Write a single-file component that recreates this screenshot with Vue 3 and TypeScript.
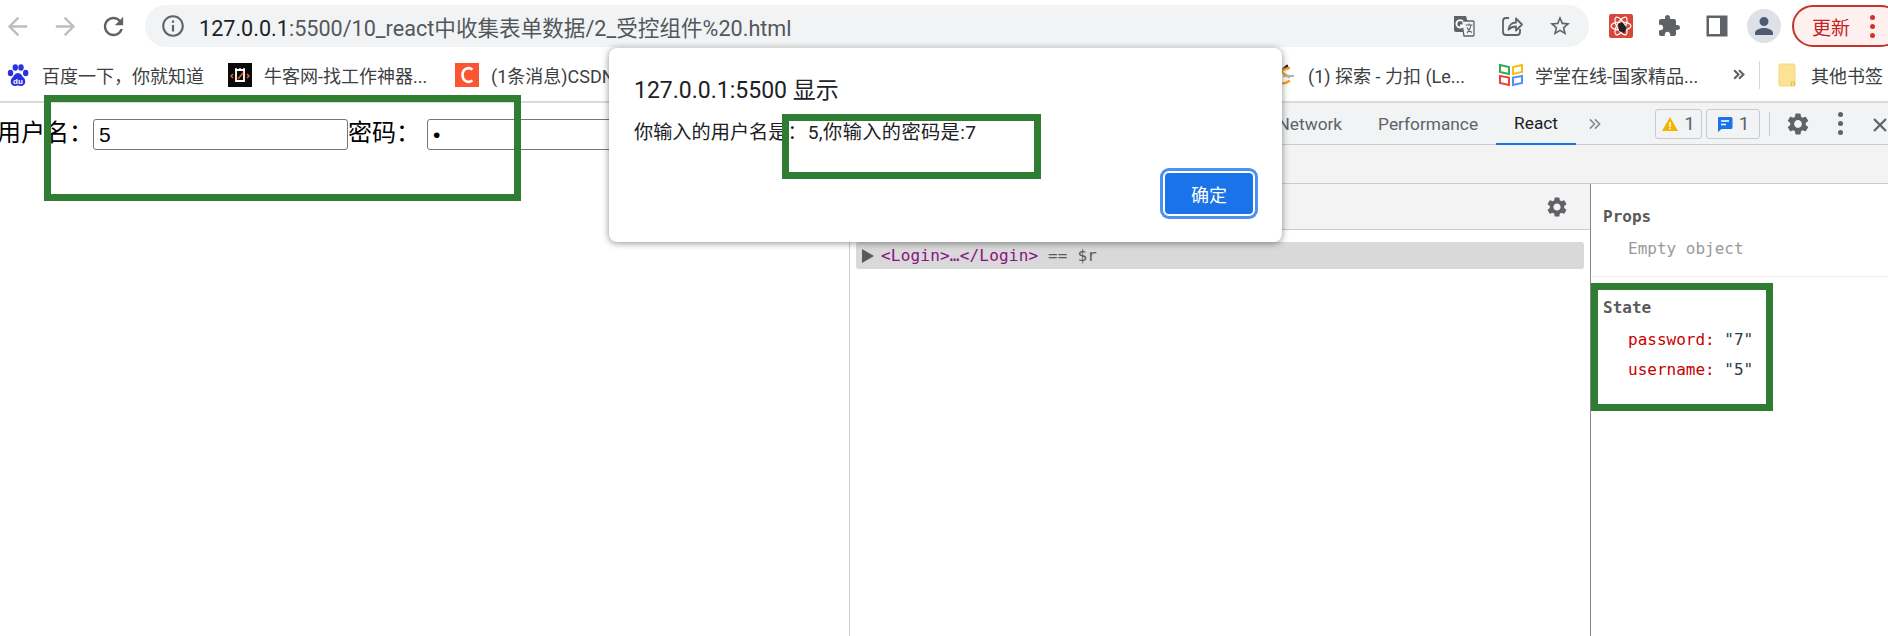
<script setup lang="ts">
const bookmarkLeft = '百度一下，你就知道'
const nowcoder = '牛客网-找工作神器...'
const csdn = '(1条消息)CSDN'
const leetcode = '(1) 探索 - 力扣 (Le...'
const xuetang = '学堂在线-国家精品...'
const others = '其他书签'
</script>

<template>
  <div class="app">
    <header class="toolbar">
      <div class="nav">
        <svg class="nav-ic faint" viewBox="0 0 24 24"><path d="M20 11H7.83l5.59-5.59L12 4l-8 8 8 8 1.41-1.41L7.83 13H20v-2z" /></svg>
      </div>
      <div class="nav">
        <svg class="nav-ic faint" viewBox="0 0 24 24"><path d="M12 4l-1.41 1.41L16.17 11H4v2h12.17l-5.58 5.59L12 20l8-8z" /></svg>
      </div>
      <div class="nav">
        <svg class="nav-ic solid" viewBox="0 0 24 24"><path d="M17.65 6.35C16.2 4.9 14.21 4 12 4c-4.42 0-7.99 3.58-7.99 8s3.57 8 7.99 8c3.73 0 6.84-2.55 7.73-6h-2.08c-.82 2.33-3.04 4-5.65 4-3.31 0-6-2.69-6-6s2.69-6 6-6c1.66 0 3.14.69 4.22 1.78L13 11h7V4l-2.35 2.35z" /></svg>
      </div>
      <div class="omnibox">
        <svg class="info-ic solid" viewBox="0 0 24 24"><path d="M11 7h2v2h-2zm0 4h2v6h-2zm1-9C6.48 2 2 6.48 2 12s4.48 10 10 10 10-4.48 10-10S17.52 2 12 2zm0 18c-4.41 0-8-3.59-8-8s3.59-8 8-8 8 3.59 8 8-3.59 8-8 8z" /></svg>
        <div class="url"><span class="host">127.0.0.1</span>:5500/10_react中收集表单数据/2_受控组件%20.html</div>
        <svg class="ic" viewBox="0 0 24 24">
          <path d="M2 2h12l1.500 5v11H4a2 2 0 0 1-2-2z" fill="#5f6368" />
          <path d="M9.500 7H21a1 1 0 0 1 1 1v13a1 1 0 0 1-1 1H12z" fill="#f1f3f4" stroke="#5f6368" stroke-width="1.300" />
          <path d="M13.500 11h7M17 9.500V11M15 19c2.200-2 3.500-4.500 4-8M15 13.500c1 2.300 2.800 4 5 5" fill="none" stroke="#5f6368" stroke-width="1.100" />
          <path d="M11 7.300A3.800 3.800 0 1 0 11.600 11.500H8" fill="none" stroke="#fff" stroke-width="1.800" />
        </svg>
        <svg class="ic" viewBox="0 0 24 24" fill="none" stroke="#5f6368" stroke-width="1.800">
          <path d="M9 4H6a3 3 0 0 0-3 3v11a3 3 0 0 0 3 3h11a3 3 0 0 0 3-3v-3" />
          <path d="M8.500 15.500c.3-4.500 3.500-7 7.500-7V4.500l6 6-6 6v-4c-3 0-5.500 1-7.500 3z" stroke-linejoin="round" />
        </svg>
        <svg class="ic solid" viewBox="0 0 24 24"><path d="M22 9.240l-7.190-.62L12 2 9.190 8.630 2 9.240l5.460 4.730L5.820 21 12 17.270 18.180 21l-1.630-7.030L22 9.240zM12 15.400l-3.760 2.270 1-4.280-3.320-2.880 4.380-.38L12 6.100l1.710 4.040 4.380.38-3.320 2.880 1 4.280L12 15.400z" /></svg>
      </div>
      <div class="actions">
        <svg class="ic" viewBox="0 0 24 24">
          <rect width="24" height="24" rx="2" fill="#d8483a" />
          <g fill="none" stroke="#fff" stroke-width="1.200">
            <ellipse cx="12" cy="12" rx="10" ry="4" />
            <ellipse cx="12" cy="12" rx="10" ry="4" transform="rotate(60 12 12)" />
            <ellipse cx="12" cy="12" rx="10" ry="4" transform="rotate(120 12 12)" />
          </g>
          <path d="M9 10l4-2 5 6-3 5-5-2z" fill="#222" />
        </svg>
        <svg class="ic solid" viewBox="0 0 24 24"><path d="M20.500 11H19V7c0-1.100-.9-2-2-2h-4V3.500C13 2.120 11.880 1 10.500 1S8 2.120 8 3.500V5H4c-1.100 0-1.990.9-1.990 2v3.800H3.500c1.490 0 2.700 1.210 2.700 2.700s-1.210 2.700-2.700 2.700H2V20c0 1.100.9 2 2 2h3.800v-1.500c0-1.490 1.210-2.700 2.700-2.700 1.490 0 2.700 1.210 2.700 2.700V22H17c1.100 0 2-.9 2-2v-4h1.500c1.380 0 2.500-1.120 2.500-2.500S21.880 11 20.500 11z" /></svg>
        <svg class="ic solid" viewBox="0 0 24 24">
          <path fill-rule="evenodd" d="M1.500 1.500h21v21h-21zM4 4v16h11V4z" />
        </svg>
        <div class="avatar">
          <svg viewBox="0 0 24 24"><path d="M12 12a4.500 4.500 0 1 0 0-9 4.500 4.500 0 0 0 0 9zm0 2c-3.500 0-9 1.700-9 5v2h18v-2c0-3.300-5.500-5-9-5z" /></svg>
        </div>
        <div class="update">
          <span>更新</span>
          <div class="update-dots"><i></i><i></i><i></i></div>
        </div>
      </div>
    </header>

    <nav class="bookmarks">
      <div class="bm bm-baidu">
        <svg class="fav" viewBox="0 0 24 24">
          <g fill="#2932e1">
            <ellipse cx="4.500" cy="10" rx="2.700" ry="3.300" />
            <ellipse cx="9.300" cy="4.500" rx="2.700" ry="3.300" />
            <ellipse cx="15" cy="4.500" rx="2.700" ry="3.300" />
            <ellipse cx="19.700" cy="10" rx="2.700" ry="3.300" />
            <path d="M12 10c-3 0-4 3-6 5s-2 8 3 8c1 0 2-.5 3-.5s2 .5 3 .5c5 0 5-6 3-8s-3-5-6-5z" />
          </g>
          <text x="12" y="20.500" class="du">du</text>
        </svg>
        <span>{{ bookmarkLeft }}</span>
      </div>
      <div class="bm bm-now">
        <svg class="fav" viewBox="0 0 24 24">
          <rect width="24" height="24" fill="#0b0b0b" />
          <path d="M8 7h8v11H8z" fill="none" stroke="#fff" stroke-width="1.800" />
          <path d="M8 5v3M12 5v3M16 5v3" stroke="#fff" stroke-width="1.500" />
          <path d="M5 11l-2 2 2 2M19 11l2 2-2 2M10 16l5-6" fill="none" stroke="#ee5a2c" stroke-width="1.500" />
        </svg>
        <span>{{ nowcoder }}</span>
      </div>
      <div class="bm bm-csdn">
        <svg class="fav" viewBox="0 0 24 24">
          <rect width="24" height="24" fill="#fc5531" />
          <path d="M17.500 6.500C13 3.500 7.500 6 7.500 12s5.500 8.500 10 5.500" fill="none" stroke="#fff" stroke-width="2.600" />
        </svg>
        <span>{{ csdn }}</span>
      </div>
      <div class="bm bm-leet">
        <svg class="fav" viewBox="0 0 24 24">
          <path d="M15 3L5 12" fill="none" stroke="#222" stroke-width="2.600" stroke-linecap="round" />
          <path d="M7 8l10 -3M9 9l8 5M5 15c1 6 7 7 12 3" fill="none" stroke="#f6a11e" stroke-width="2.400" stroke-linecap="round" />
          <path d="M11 13h11" stroke="#b5b5b5" stroke-width="2.200" />
        </svg>
        <span>{{ leetcode }}</span>
      </div>
      <div class="bm bm-xue">
        <svg class="fav" viewBox="0 0 24 24">
          <path d="M1 2l9 2v7l-9-2z" fill="none" stroke="#35a853" stroke-width="2" />
          <path d="M23 2l-9 2v7l9-2z" fill="none" stroke="#f7bd16" stroke-width="2" />
          <path d="M1 13l9 1.500v7.500l-9-2z" fill="none" stroke="#ea4335" stroke-width="2" />
          <path d="M23 13l-9 1.500v7.500l9-2z" fill="none" stroke="#4f8ff7" stroke-width="2" />
        </svg>
        <span>{{ xuetang }}</span>
      </div>
      <div class="bm-more">
        <svg viewBox="0 0 12 12" fill="none" stroke="#5f6368" stroke-width="2"><path d="M2 2l4 4-4 4M6.500 2l4 4-4 4" /></svg>
      </div>
      <div class="bm-sep"></div>
      <div class="bm bm-other">
        <svg class="folder" viewBox="0 0 18 24">
          <path d="M1 2a1 1 0 0 1 1-1h13a2 2 0 0 1 2 2v19a1 1 0 0 1-1 1H2a1 1 0 0 1-1-1z" fill="#fde293" stroke="#f5d77f" />
          <path d="M13.500 23v-4h3v4" fill="none" stroke="#e7bb4c" stroke-width="1.200" />
        </svg>
        <span>{{ others }}</span>
      </div>
    </nav>

    <main class="main">
      <section class="page">
        <label class="field-label user-label">用户名：</label>
        <input class="field" type="text" value="5" />
        <label class="field-label pass-label">密码：</label>
        <input class="field" type="password" value="7" />
      </section>

      <section class="devtools">
        <div class="dt-tabs">
          <div class="tabs">
            <span class="tab">Network</span>
            <span class="tab">Performance</span>
            <span class="tab active">React</span>
          </div>
          <div class="dt-right">
            <svg class="chev" viewBox="0 0 14 12" fill="none" stroke="#80868b" stroke-width="1.600"><path d="M2 1l5 5-5 5M7.500 1l5 5-5 5" /></svg>
            <div class="badge badge-warn">
              <svg viewBox="0 0 16 16"><path d="M8 1l8 14H0z" fill="#f4b400" /><path d="M7.200 6h1.600v5H7.200zM7.200 11.800h1.600v1.500H7.200z" fill="#fff" /></svg>
              <span>1</span>
            </div>
            <div class="badge badge-msg">
              <svg viewBox="0 0 16 16"><path d="M2 1h12a1.500 1.500 0 0 1 1.500 1.500v9A1.500 1.500 0 0 1 14 13H4.500L1 16V2.500A1.500 1.500 0 0 1 2 1z" fill="#1a73e8" /><path d="M4 5h8M4 8.500h5" stroke="#fff" stroke-width="1.400" /></svg>
              <span>1</span>
            </div>
            <div class="dt-sep"></div>
            <svg class="gear gear-top" viewBox="0 0 24 24"><path d="M19.140 12.940c.04-.3.06-.61.06-.94 0-.32-.02-.64-.07-.94l2.030-1.580a.49.49 0 0 0 .12-.61l-1.920-3.320a.488.488 0 0 0-.59-.22l-2.390.96c-.5-.38-1.030-.7-1.620-.94l-.36-2.540a.484.484 0 0 0-.48-.41h-3.840c-.24 0-.43.17-.47.41l-.36 2.540c-.59.24-1.130.57-1.620.94l-2.390-.96c-.22-.08-.47 0-.59.22L2.740 8.870c-.12.21-.08.47.12.61l2.030 1.580c-.05.3-.09.63-.09.94s.02.64.07.94l-2.030 1.580a.49.49 0 0 0-.12.61l1.920 3.320c.12.22.37.29.59.22l2.390-.96c.5.38 1.030.7 1.620.94l.36 2.540c.05.24.24.41.48.41h3.840c.24 0 .44-.17.47-.41l.36-2.540c.59-.24 1.130-.56 1.620-.94l2.390.96c.22.08.47 0 .59-.22l1.920-3.320c.12-.22.07-.47-.12-.61l-2.010-1.580zM12 15.600c-1.980 0-3.600-1.620-3.600-3.600s1.620-3.600 3.600-3.600 3.600 1.620 3.600 3.600-1.620 3.600-3.600 3.600z" /></svg>
            <div class="kebab"><i></i><i></i><i></i></div>
            <svg class="close" viewBox="0 0 16 16" fill="none" stroke="#5f6368" stroke-width="2.200"><path d="M2 3l12 12M14 3L2 15" /></svg>
          </div>
        </div>
        <div class="dt-sub"></div>
        <div class="panes">
          <div class="tree-pane">
            <div class="tree-head">
              <svg class="gear" viewBox="0 0 24 24"><path d="M19.140 12.940c.04-.3.06-.61.06-.94 0-.32-.02-.64-.07-.94l2.030-1.580a.49.49 0 0 0 .12-.61l-1.920-3.320a.488.488 0 0 0-.59-.22l-2.390.96c-.5-.38-1.030-.7-1.620-.94l-.36-2.540a.484.484 0 0 0-.48-.41h-3.840c-.24 0-.43.17-.47.41l-.36 2.540c-.59.24-1.130.57-1.620.94l-2.390-.96c-.22-.08-.47 0-.59.22L2.740 8.870c-.12.21-.08.47.12.61l2.030 1.580c-.05.3-.09.63-.09.94s.02.64.07.94l-2.030 1.580a.49.49 0 0 0-.12.61l1.920 3.320c.12.22.37.29.59.22l2.390-.96c.5.38 1.030.7 1.620.94l.36 2.540c.05.24.24.41.48.41h3.840c.24 0 .44-.17.47-.41l.36-2.540c.59-.24 1.130-.56 1.620-.94l2.390.96c.22.08.47 0 .59-.22l1.920-3.320c.12-.22.07-.47-.12-.61l-2.010-1.580zM12 15.600c-1.980 0-3.600-1.620-3.600-3.600s1.620-3.600 3.600-3.600 3.600 1.620 3.600 3.600-1.620 3.600-3.600 3.600z" /></svg>
            </div>
            <div class="tree-row">
              <svg class="tri" viewBox="0 0 12 14"><path d="M0 0l12 7-12 7z" /></svg>
              <span class="tag">&lt;Login&gt;…&lt;/Login&gt;</span>
              <span class="eq">== $r</span>
            </div>
          </div>
          <aside class="side">
            <div class="group props">
              <div class="head">Props</div>
              <div class="empty">Empty object</div>
            </div>
            <div class="group state">
              <div class="head">State</div>
              <div class="kv"><span class="k">password:</span> <span class="v">"7"</span></div>
              <div class="kv"><span class="k">username:</span> <span class="v">"5"</span></div>
            </div>
          </aside>
        </div>
      </section>
    </main>

    <div class="dialog">
      <div class="dialog-title">127.0.0.1:5500 显示</div>
      <div class="dialog-msg">你输入的用户名是：<span class="msg-rest">5,你输入的密码是:7</span></div>
      <div class="dialog-actions">
        <button class="ok" type="button">确定</button>
      </div>
    </div>

    <div class="mark mark-form"></div>
    <div class="mark mark-msg"></div>
    <div class="mark mark-state"></div>
  </div>
</template>

<style scoped>
.app {
  position: relative;
  width: 1888px;
  height: 636px;
  overflow: hidden;
  background: #fff;
  font-family: Roboto, "Noto Sans CJK SC", sans-serif;
  color: #000;
}

/* ---- browser toolbar ---- */
.toolbar {
  display: flex;
  align-items: center;
  height: 48px;
  padding-top: 4px;
  box-sizing: border-box;
  gap: 14px;
  overflow: hidden;
}
.nav {
  display: flex;
  justify-content: center;
  width: 34px;
  flex: none;
}
.nav-ic {
  width: 29px;
  height: 29px;
  flex: none;
}
.info-ic {
  width: 26px;
  height: 26px;
  flex: none;
}
.ic {
  width: 24px;
  height: 24px;
  flex: none;
}
.solid {
  fill: #5f6368;
}
.faint {
  fill: #bcbec1;
}
.omnibox {
  display: flex;
  align-items: center;
  gap: 24px;
  flex: none;
  box-sizing: border-box;
  width: 1444px;
  height: 42px;
  margin-left: 1px;
  padding: 0 17px 0 15px;
  border-radius: 21px;
  background: #f1f3f4;
}
.url {
  flex: 1;
  margin-left: -11px;
  font-size: 21.600px;
  color: #53575b;
  white-space: nowrap;
}
.host {
  color: #202124;
}
.actions {
  display: flex;
  align-items: center;
  gap: 24px;
  flex: none;
  margin-left: 6px;
}
.avatar {
  display: flex;
  align-items: center;
  justify-content: center;
  width: 34px;
  height: 34px;
  margin-left: -6px;
  border-radius: 50%;
  background: #dee1e6;
}
.avatar svg {
  width: 24px;
  height: 24px;
  fill: #4d5b73;
}
.update {
  display: flex;
  align-items: center;
  flex: none;
  box-sizing: border-box;
  width: 110px;
  height: 42px;
  margin-left: -13px;
  padding-left: 18px;
  border: 2px solid #c5342c;
  border-radius: 21px;
  background: #fdf0ef;
  color: #c5221f;
  font-size: 19px;
}
.update-dots {
  display: flex;
  flex-direction: column;
  gap: 4px;
  margin-left: 20px;
}
.update-dots i {
  display: block;
  width: 5px;
  height: 5px;
  border-radius: 50%;
  background: #d93025;
}

/* ---- bookmarks ---- */
.bookmarks {
  display: flex;
  align-items: center;
  box-sizing: border-box;
  height: 55px;
  padding-left: 6px;
  border-bottom: 2px solid #dadada;
  font-size: 18px;
  color: #3c4043;
  white-space: nowrap;
  overflow: hidden;
}
.bm {
  display: flex;
  align-items: center;
  gap: 12px;
  flex: none;
}
.fav {
  width: 24px;
  height: 24px;
  flex: none;
}
.du {
  font-family: "Liberation Sans", sans-serif;
  font-size: 8px;
  font-weight: 700;
  fill: #fff;
  text-anchor: middle;
}
.bm-baidu {
  width: 222px;
}
.bm-now {
  width: 227px;
}
.bm-csdn {
  width: 817px;
}
.bm-leet {
  width: 227px;
}
.bm-xue {
  width: 232px;
}
.bm-more {
  display: flex;
  flex: none;
  width: 14px;
  margin-left: 1px;
}
.bm-more svg {
  width: 13px;
  height: 13px;
}
.bm-sep {
  flex: none;
  width: 1px;
  height: 28px;
  margin-left: 13px;
  background: #d5d7da;
}
.bm-other {
  gap: 15px;
  margin-left: 18px;
}
.folder {
  width: 18px;
  height: 24px;
}

/* ---- page ---- */
.main {
  display: flex;
  height: 534px;
}
.page {
  display: flex;
  align-items: flex-start;
  flex: none;
  box-sizing: border-box;
  width: 850px;
  padding-top: 16px;
  border-right: 1px solid #d0d0d0;
  overflow: hidden;
  font-family: "Noto Sans CJK SC", sans-serif;
}
.field-label {
  flex: none;
  height: 24px;
  font-size: 24px;
  line-height: 24px;
}
.user-label {
  width: 96px;
  margin-left: -3px;
}
.pass-label {
  width: 79px;
}
.field {
  flex: none;
  box-sizing: border-box;
  width: 255px;
  height: 31px;
  padding: 0 5px;
  border: 1px solid #767676;
  border-radius: 3px;
  background: #fff;
  color: #000;
  font-family: "Liberation Sans", sans-serif;
  font-size: 21px;
  outline: none;
}

/* ---- devtools ---- */
.devtools {
  display: flex;
  flex: 1;
  flex-direction: column;
  min-width: 0;
}
.dt-tabs {
  display: flex;
  flex: none;
  box-sizing: border-box;
  height: 42px;
  border-bottom: 1px solid #cbcdd1;
  background: #f1f3f4;
}
.tabs {
  display: flex;
  flex: 1;
  justify-content: flex-end;
}
.tab {
  display: flex;
  align-items: center;
  box-sizing: border-box;
  height: 42px;
  padding: 0 18px;
  color: #5f6368;
  font-size: 17.300px;
}
.tab.active {
  border-bottom: 2px solid #1a73e8;
  color: #202124;
}
.dt-right {
  display: flex;
  align-items: center;
  flex: none;
  width: 312px;
}
.chev {
  width: 14px;
  height: 12px;
  margin-left: 12px;
}
.badge {
  display: flex;
  align-items: center;
  justify-content: center;
  gap: 6px;
  flex: none;
  box-sizing: border-box;
  height: 30px;
  border: 1px solid #c8cbd0;
  border-radius: 3px;
  color: #5f6368;
  font-size: 19px;
}
.badge svg {
  width: 16px;
  height: 16px;
}
.badge-warn {
  width: 47px;
  margin-left: 54px;
}
.badge-msg {
  width: 54px;
  margin-left: 4px;
}
.dt-sep {
  flex: none;
  width: 1px;
  height: 24px;
  margin-left: 9px;
  background: #c8cbd0;
}
.gear {
  flex: none;
  width: 24px;
  height: 24px;
  fill: #5f6368;
}
.gear-top {
  width: 26px;
  height: 26px;
  margin-left: 15px;
}
.kebab {
  display: flex;
  flex-direction: column;
  gap: 4px;
  flex: none;
  margin-left: 27px;
}
.kebab i {
  display: block;
  width: 5px;
  height: 5px;
  border-radius: 50%;
  background: #5f6368;
}
.close {
  flex: none;
  width: 16px;
  height: 16px;
  margin-left: 29px;
}
.dt-sub {
  flex: none;
  box-sizing: border-box;
  height: 39px;
  border-bottom: 1px solid #cccccc;
  background: #f3f3f3;
}
.panes {
  display: flex;
  flex: 1;
  min-height: 0;
}
.tree-pane {
  flex: none;
  box-sizing: border-box;
  width: 740px;
}
.tree-head {
  display: flex;
  align-items: center;
  justify-content: flex-end;
  box-sizing: border-box;
  height: 46px;
  padding-right: 21px;
  border-bottom: 1px solid #ccc;
  background: #f3f3f3;
}
.tree-row {
  display: flex;
  align-items: center;
  height: 27px;
  margin: 12px 6px 0;
  padding-left: 6px;
  border-radius: 3px;
  background: #d9d9d9;
  font-family: "DejaVu Sans Mono", monospace;
  font-size: 16px;
  letter-spacing: 0.200px;
  color: #5a5a5a;
  white-space: pre;
}
.tri {
  flex: none;
  width: 12px;
  height: 14px;
  margin-right: 7px;
  fill: #5a5a5a;
}
.tag {
  margin-right: 9.600px;
  color: #881280;
}
.side {
  flex: 1;
  box-sizing: border-box;
  border-left: 1px solid #888;
  font-family: "DejaVu Sans Mono", monospace;
  font-size: 16px;
  line-height: 24px;
}
.group {
  padding-left: 12px;
}
.props {
  padding-top: 21px;
  padding-bottom: 15px;
  border-bottom: 1px solid #eeeeee;
}
.state {
  padding-top: 19px;
}
.head {
  font-weight: 700;
  color: #5a5a5a;
}
.empty {
  margin-top: 8px;
  padding-left: 25px;
  color: #999;
}
.kv {
  margin-top: 6px;
  padding-left: 25px;
}
.state .head + .kv {
  margin-top: 8px;
}
.k {
  color: #c80000;
}
.v {
  color: #303942;
}

/* ---- alert dialog, lies over the browser ---- */
.dialog {
  position: absolute;
  left: 609px;
  top: 48px;
  display: flex;
  flex-direction: column;
  box-sizing: border-box;
  width: 673px;
  height: 194px;
  padding: 28px 24px 26px 25px;
  border-radius: 8px;
  background: #fff;
  box-shadow: 0 1px 7px rgba(0, 0, 0, 0.45);
}
.dialog-title {
  font-size: 23px;
  line-height: 30px;
  color: #202124;
}
.dialog-msg {
  margin-top: 14px;
  font-size: 19.200px;
  line-height: 26px;
  color: #202124;
}
.msg-rest {
  margin-left: 1px;
  letter-spacing: 0.400px;
}
.dialog-actions {
  display: flex;
  justify-content: flex-end;
  margin-top: auto;
}
.ok {
  box-sizing: border-box;
  width: 92px;
  height: 45px;
  margin-right: 3px;
  border: 2px solid #fff;
  border-radius: 6px;
  background: #1a73e8;
  box-shadow: 0 0 0 3px #4e8ff4;
  color: #fff;
  font-family: "Noto Sans CJK SC", sans-serif;
  font-size: 18px;
}

/* ---- annotation rectangles drawn over the screenshot ---- */
.mark {
  position: absolute;
  box-sizing: border-box;
  border: 7px solid #2e7d32;
  pointer-events: none;
}
.mark-form {
  left: 44px;
  top: 95px;
  width: 477px;
  height: 106px;
}
.mark-msg {
  left: 782px;
  top: 114px;
  width: 259px;
  height: 65px;
}
.mark-state {
  left: 1591px;
  top: 283px;
  width: 182px;
  height: 128px;
}
</style>
